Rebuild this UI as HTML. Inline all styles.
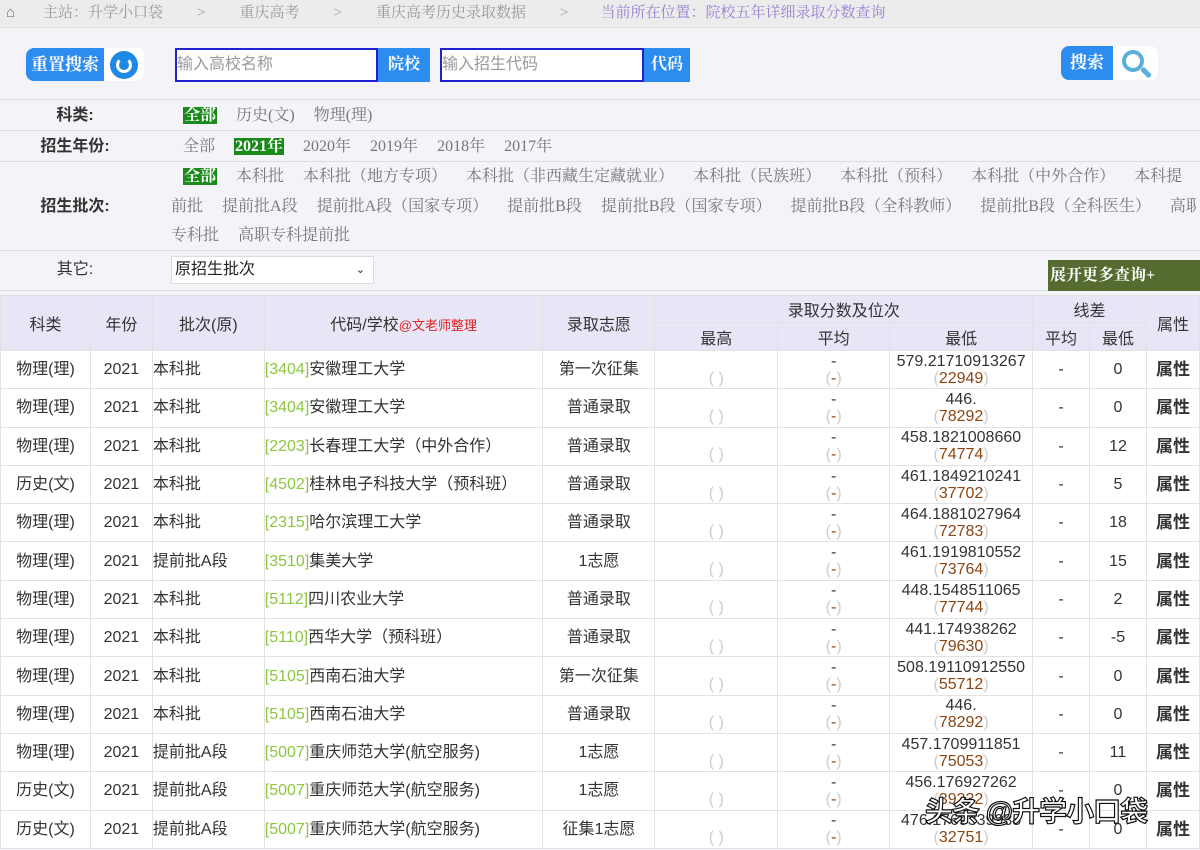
<!DOCTYPE html>
<html><head><meta charset="utf-8">
<style>
*{margin:0;padding:0;box-sizing:border-box}
body{width:1200px;height:850px;overflow:hidden;background:#f4f4f8;font-family:"Liberation Sans","Noto Sans CJK SC",sans-serif;position:relative;color:#333}
.a{position:absolute}
.serif{font-family:"Liberation Serif","Noto Serif CJK SC",serif}
#bc{left:0;top:0;width:1200px;height:28px;background:#ececec;font-size:15px;color:#999;line-height:27px;border-bottom:1px solid #e0e0e0;white-space:nowrap}
.frow{left:0;width:1200px;border-bottom:1px solid #dcdce4;font-size:16px}
.lab{position:absolute;left:0;width:150px;text-align:center;font-weight:bold;color:#333;font-family:"Liberation Sans","Noto Sans CJK SC",sans-serif}
.vals{position:absolute;left:183px;color:#777}
.vals span{margin-right:19px}
.sel{background:#1a8a1a;color:#fff;font-weight:bold;padding:0 1px}
table{position:absolute;left:0;top:295px;border-collapse:collapse;width:1200px;font-size:16px}
td,th{border:1px solid #e2e2e2;text-align:center;font-weight:normal}
th{background:#e6e6f6;color:#333}
tbody td{background:#fff;height:38.3px;line-height:17px}
.l{text-align:left}
.c{color:#8dc63f}
.g{color:#ccc}
.r{color:#8b4513}
.b{font-weight:bold;font-size:17px}
</style></head><body>
<div id="bc" class="a serif"><span style="margin-left:6px;color:#777">&#8962;</span><span style="margin-left:28px">主站：升学小口袋</span><span style="margin-left:34px">&gt;</span><span style="margin-left:34px">重庆高考</span><span style="margin-left:34px">&gt;</span><span style="margin-left:34px">重庆高考历史录取数据</span><span style="margin-left:34px">&gt;</span><span style="margin-left:32px;color:#9a7ed0">当前所在位置：院校五年详细录取分数查询</span></div>

<div class="a serif" style="left:26px;top:48px;width:78px;height:33px;background:#2d8cf0;border-radius:8px 0 0 8px;color:#fff;font-weight:bold;font-size:17px;line-height:33px;text-align:center">重置搜索</div>
<div class="a" style="left:104px;top:48px;width:40px;height:33px;background:#fff;border-radius:0 8px 8px 0"></div>
<div class="a" style="left:110px;top:51px;width:28px;height:28px;border-radius:50%;background:#1e88e5"></div>
<div class="a" style="left:116px;top:57px;width:16px;height:16px;border-radius:50%;border:3px solid #fff;border-top-color:transparent"></div>

<div class="a" style="left:175px;top:48px;width:203px;height:34px;background:#fff;border:2px solid #2020d0;font-size:16px;color:#999;line-height:30px">输入高校名称</div>
<div class="a serif" style="left:378px;top:48px;width:52px;height:34px;background:#2d8cf0;color:#fff;font-weight:bold;font-size:16px;line-height:34px;text-align:center">院校</div>
<div class="a" style="left:440px;top:48px;width:204px;height:34px;background:#fff;border:2px solid #2020d0;font-size:16px;color:#999;line-height:30px">输入招生代码</div>
<div class="a serif" style="left:644px;top:48px;width:46px;height:34px;background:#2d8cf0;color:#fff;font-weight:bold;font-size:16px;line-height:34px;text-align:center">代码</div>

<div class="a serif" style="left:1061px;top:46px;width:52px;height:34px;background:#2d8cf0;border-radius:8px 0 0 8px;color:#fff;font-weight:bold;font-size:17px;line-height:34px;text-align:center">搜索</div>
<div class="a" style="left:1113px;top:46px;width:45px;height:34px;background:#fff;border-radius:0 8px 8px 0"></div>
<div class="a" style="left:1122px;top:50px;width:22px;height:22px;border-radius:50%;border:4px solid #5ab0dc"></div>
<div class="a" style="left:1140px;top:70px;width:12px;height:5px;background:#5ab0dc;transform:rotate(45deg);border-radius:2px"></div>

<div class="a frow" style="top:99px;height:1px;border-bottom:1px solid #dcdce4"></div>
<div class="a frow serif" style="top:100px;height:31px;line-height:31px"><div class="lab">科类:</div><div class="vals"><span class="sel">全部</span><span>历史(文)</span><span>物理(理)</span></div></div>
<div class="a frow serif" style="top:131px;height:31px;line-height:31px"><div class="lab">招生年份:</div><div class="vals"><span>全部</span><span class="sel">2021年</span><span>2020年</span><span>2019年</span><span>2018年</span><span>2017年</span></div></div>
<div class="a frow serif" style="top:162px;height:89px;line-height:29.5px"><div class="lab" style="top:30px">招生批次:</div>
<div class="vals" style="left:171px;width:1025px;white-space:nowrap;overflow:hidden">
<div style="padding-left:12px"><span class="sel">全部</span><span>本科批</span><span>本科批（地方专项）</span><span>本科批（非西藏生定藏就业）</span><span>本科批（民族班）</span><span>本科批（预科）</span><span>本科批（中外合作）</span><span>本科提</span></div>
<div><span>前批</span><span>提前批A段</span><span>提前批A段（国家专项）</span><span>提前批B段</span><span>提前批B段（国家专项）</span><span>提前批B段（全科教师）</span><span>提前批B段（全科医生）</span><span>高职</span></div>
<div><span>专科批</span><span>高职专科提前批</span></div></div></div>
<div class="a frow" style="top:251px;height:40px;line-height:38px"><div class="lab" style="font-weight:normal">其它:</div>
<div class="a" style="left:171px;top:5px;width:203px;height:28px;background:#fff;border:1px solid #ddd;font-size:16px;line-height:26px;padding-left:3px;color:#222">原招生批次<span style="position:absolute;right:8px;font-size:11px">&#8964;</span></div>
<div class="a serif" style="left:1048px;top:9px;width:152px;height:31px;background:#556b2f;color:#fff;font-weight:bold;font-size:16px;line-height:31px;padding-left:2px">展开更多查询+</div></div>

<table>
<colgroup><col style="width:90px"><col style="width:62px"><col style="width:112px"><col style="width:279px"><col style="width:112px"><col style="width:123px"><col style="width:112px"><col style="width:143px"><col style="width:57px"><col style="width:57px"><col style="width:53px"></colgroup>
<thead>
<tr style="height:27px"><th rowspan="2">科类</th><th rowspan="2">年份</th><th rowspan="2">批次(原)</th><th rowspan="2">代码/学校<span style="color:#e02020;font-size:13px">@文老师整理</span></th><th rowspan="2">录取志愿</th><th colspan="3">录取分数及位次</th><th colspan="2">线差</th><th rowspan="2">属性</th></tr>
<tr style="height:28px"><th>最高</th><th>平均</th><th>最低</th><th>平均</th><th>最低</th></tr>
</thead>
<tbody>
<tr><td>物理(理)</td><td>2021</td><td class="l">本科批</td><td class="l"><span class="c">[3404]</span>安徽理工大学</td><td>第一次征集</td><td><br><span class="g">( )</span></td><td>-<br><span class="g">(</span><span class="r">-</span><span class="g">)</span></td><td>579.21710913267<br><span class="g">(</span><span class="r">22949</span><span class="g">)</span></td><td>-</td><td>0</td><td class="b">属性</td></tr>
<tr><td>物理(理)</td><td>2021</td><td class="l">本科批</td><td class="l"><span class="c">[3404]</span>安徽理工大学</td><td>普通录取</td><td><br><span class="g">( )</span></td><td>-<br><span class="g">(</span><span class="r">-</span><span class="g">)</span></td><td>446.<br><span class="g">(</span><span class="r">78292</span><span class="g">)</span></td><td>-</td><td>0</td><td class="b">属性</td></tr>
<tr><td>物理(理)</td><td>2021</td><td class="l">本科批</td><td class="l"><span class="c">[2203]</span>长春理工大学（中外合作）</td><td>普通录取</td><td><br><span class="g">( )</span></td><td>-<br><span class="g">(</span><span class="r">-</span><span class="g">)</span></td><td>458.1821008660<br><span class="g">(</span><span class="r">74774</span><span class="g">)</span></td><td>-</td><td>12</td><td class="b">属性</td></tr>
<tr><td>历史(文)</td><td>2021</td><td class="l">本科批</td><td class="l"><span class="c">[4502]</span>桂林电子科技大学（预科班）</td><td>普通录取</td><td><br><span class="g">( )</span></td><td>-<br><span class="g">(</span><span class="r">-</span><span class="g">)</span></td><td>461.1849210241<br><span class="g">(</span><span class="r">37702</span><span class="g">)</span></td><td>-</td><td>5</td><td class="b">属性</td></tr>
<tr><td>物理(理)</td><td>2021</td><td class="l">本科批</td><td class="l"><span class="c">[2315]</span>哈尔滨理工大学</td><td>普通录取</td><td><br><span class="g">( )</span></td><td>-<br><span class="g">(</span><span class="r">-</span><span class="g">)</span></td><td>464.1881027964<br><span class="g">(</span><span class="r">72783</span><span class="g">)</span></td><td>-</td><td>18</td><td class="b">属性</td></tr>
<tr><td>物理(理)</td><td>2021</td><td class="l">提前批A段</td><td class="l"><span class="c">[3510]</span>集美大学</td><td>1志愿</td><td><br><span class="g">( )</span></td><td>-<br><span class="g">(</span><span class="r">-</span><span class="g">)</span></td><td>461.1919810552<br><span class="g">(</span><span class="r">73764</span><span class="g">)</span></td><td>-</td><td>15</td><td class="b">属性</td></tr>
<tr><td>物理(理)</td><td>2021</td><td class="l">本科批</td><td class="l"><span class="c">[5112]</span>四川农业大学</td><td>普通录取</td><td><br><span class="g">( )</span></td><td>-<br><span class="g">(</span><span class="r">-</span><span class="g">)</span></td><td>448.1548511065<br><span class="g">(</span><span class="r">77744</span><span class="g">)</span></td><td>-</td><td>2</td><td class="b">属性</td></tr>
<tr><td>物理(理)</td><td>2021</td><td class="l">本科批</td><td class="l"><span class="c">[5110]</span>西华大学（预科班）</td><td>普通录取</td><td><br><span class="g">( )</span></td><td>-<br><span class="g">(</span><span class="r">-</span><span class="g">)</span></td><td>441.174938262<br><span class="g">(</span><span class="r">79630</span><span class="g">)</span></td><td>-</td><td>-5</td><td class="b">属性</td></tr>
<tr><td>物理(理)</td><td>2021</td><td class="l">本科批</td><td class="l"><span class="c">[5105]</span>西南石油大学</td><td>第一次征集</td><td><br><span class="g">( )</span></td><td>-<br><span class="g">(</span><span class="r">-</span><span class="g">)</span></td><td>508.19110912550<br><span class="g">(</span><span class="r">55712</span><span class="g">)</span></td><td>-</td><td>0</td><td class="b">属性</td></tr>
<tr><td>物理(理)</td><td>2021</td><td class="l">本科批</td><td class="l"><span class="c">[5105]</span>西南石油大学</td><td>普通录取</td><td><br><span class="g">( )</span></td><td>-<br><span class="g">(</span><span class="r">-</span><span class="g">)</span></td><td>446.<br><span class="g">(</span><span class="r">78292</span><span class="g">)</span></td><td>-</td><td>0</td><td class="b">属性</td></tr>
<tr><td>物理(理)</td><td>2021</td><td class="l">提前批A段</td><td class="l"><span class="c">[5007]</span>重庆师范大学(航空服务)</td><td>1志愿</td><td><br><span class="g">( )</span></td><td>-<br><span class="g">(</span><span class="r">-</span><span class="g">)</span></td><td>457.1709911851<br><span class="g">(</span><span class="r">75053</span><span class="g">)</span></td><td>-</td><td>11</td><td class="b">属性</td></tr>
<tr><td>历史(文)</td><td>2021</td><td class="l">提前批A段</td><td class="l"><span class="c">[5007]</span>重庆师范大学(航空服务)</td><td>1志愿</td><td><br><span class="g">( )</span></td><td>-<br><span class="g">(</span><span class="r">-</span><span class="g">)</span></td><td>456.176927262<br><span class="g">(</span><span class="r">39332</span><span class="g">)</span></td><td>-</td><td>0</td><td class="b">属性</td></tr>
<tr><td>历史(文)</td><td>2021</td><td class="l">提前批A段</td><td class="l"><span class="c">[5007]</span>重庆师范大学(航空服务)</td><td>征集1志愿</td><td><br><span class="g">( )</span></td><td>-<br><span class="g">(</span><span class="r">-</span><span class="g">)</span></td><td>476.1769339935<br><span class="g">(</span><span class="r">32751</span><span class="g">)</span></td><td>-</td><td>0</td><td class="b">属性</td></tr>
</tbody></table>
<div class="a" style="left:925px;top:790px;font-size:28px;color:#fff;-webkit-text-stroke:1.2px #111;font-weight:bold;letter-spacing:-1px">头条 @升学小口袋</div>
</body></html>
